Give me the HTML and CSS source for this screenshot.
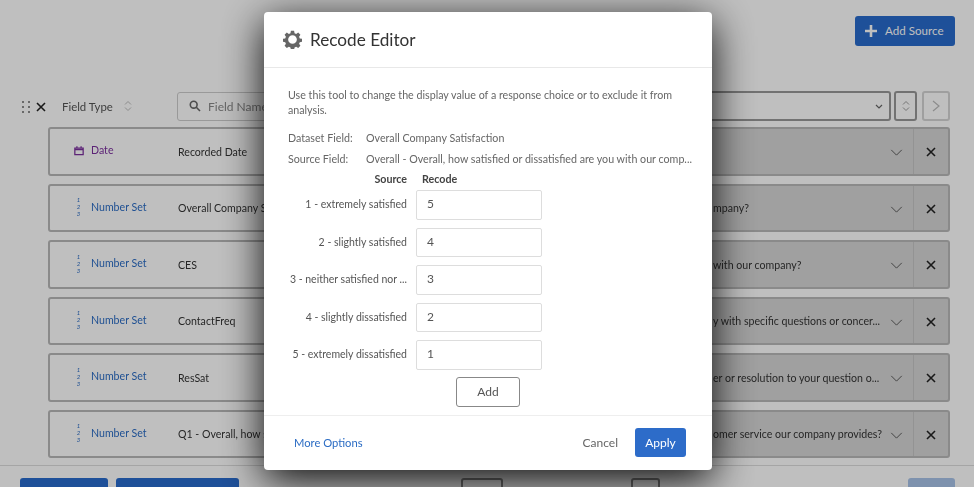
FILE: index.html
```html
<!DOCTYPE html>
<html lang="en">
<head>
<meta charset="utf-8">
<title>Recode Editor</title>
<link rel="stylesheet" href="styles.css">
</head>
<body>
<div class="app">
  <div class="topbar">
    <button class="add-source"><svg class="plus" viewBox="0 0 14 14"><path d="M7 1v12M1 7h12"/></svg>Add Source</button>
  </div>
  <div class="filters">
    <svg class="grip" viewBox="0 0 8 12"><g><circle cx="1" cy="1" r="1"/><circle cx="7" cy="1" r="1"/><circle cx="1" cy="6" r="1"/><circle cx="7" cy="6" r="1"/><circle cx="1" cy="11" r="1"/><circle cx="7" cy="11" r="1"/></g></svg>
    <svg class="cross head-cross" viewBox="0 0 10 10"><path d="M1 1l8 8M9 1l-8 8"/></svg>
    <span class="field-type">Field Type</span>
    <svg class="updown faint" viewBox="0 0 8 12"><path d="M1 4.5L4 1.5l3 3M1 7.5l3 3 3-3"/></svg>
    <div class="search">
      <svg class="lens" viewBox="0 0 12 12"><circle cx="4.7" cy="4.7" r="3.4"/><path d="M7.3 7.3l3.7 3.7"/></svg>
      <span>Field Name</span>
    </div>
    <div class="select"><svg class="mini-chev" viewBox="0 0 8 5"><path d="M1 1l3 3 3-3"/></svg></div>
    <button class="sort"><svg class="updown" viewBox="0 0 8 12"><path d="M1 4.5L4 1.5l3 3M1 7.5l3 3 3-3"/></svg></button>
    <button class="next"><svg viewBox="0 0 8 12"><path d="M1 1l6 5-6 5"/></svg></button>
  </div>
  <div class="rows">
    <div class="row"><div class="type date"><svg class="cal" viewBox="0 0 12 12"><path d="M1 3h10v8H1zM1 5h10M3.500 1v2M8.500 1v2"/></svg>Date</div><div class="name">Recorded Date</div><div class="desc"></div><svg class="chev" viewBox="0 0 14 8"><path d="M1 1l6 6 6-6"/></svg><div class="del"><svg class="cross" viewBox="0 0 10 10"><path d="M1 1l8 8M9 1l-8 8"/></svg></div></div>
    <div class="row"><div class="type"><span class="nums">1<br>2<br>3</span>Number Set</div><div class="name">Overall Company S</div><div class="desc">mpany?</div><svg class="chev" viewBox="0 0 14 8"><path d="M1 1l6 6 6-6"/></svg><div class="del"><svg class="cross" viewBox="0 0 10 10"><path d="M1 1l8 8M9 1l-8 8"/></svg></div></div>
    <div class="row"><div class="type"><span class="nums">1<br>2<br>3</span>Number Set</div><div class="name">CES</div><div class="desc">with our company?</div><svg class="chev" viewBox="0 0 14 8"><path d="M1 1l6 6 6-6"/></svg><div class="del"><svg class="cross" viewBox="0 0 10 10"><path d="M1 1l8 8M9 1l-8 8"/></svg></div></div>
    <div class="row"><div class="type"><span class="nums">1<br>2<br>3</span>Number Set</div><div class="name">ContactFreq</div><div class="desc">y with specific questions or concer...</div><svg class="chev" viewBox="0 0 14 8"><path d="M1 1l6 6 6-6"/></svg><div class="del"><svg class="cross" viewBox="0 0 10 10"><path d="M1 1l8 8M9 1l-8 8"/></svg></div></div>
    <div class="row"><div class="type"><span class="nums">1<br>2<br>3</span>Number Set</div><div class="name">ResSat</div><div class="desc">er or resolution to your question o...</div><svg class="chev" viewBox="0 0 14 8"><path d="M1 1l6 6 6-6"/></svg><div class="del"><svg class="cross" viewBox="0 0 10 10"><path d="M1 1l8 8M9 1l-8 8"/></svg></div></div>
    <div class="row"><div class="type"><span class="nums">1<br>2<br>3</span>Number Set</div><div class="name">Q1 - Overall, how s</div><div class="desc">omer service our company provides?</div><svg class="chev" viewBox="0 0 14 8"><path d="M1 1l6 6 6-6"/></svg><div class="del"><svg class="cross" viewBox="0 0 10 10"><path d="M1 1l8 8M9 1l-8 8"/></svg></div></div>
    <div class="row"></div>
  </div>
  <div class="footer">
    <button class="foot-btn first"></button>
    <button class="foot-btn second"></button>
    <div class="pager"><button class="page-btn wide"></button><button class="page-btn"></button></div>
    <button class="foot-btn last"></button>
  </div>
</div>
<div class="overlay"></div>
<div class="modal">
  <header class="modal-head">
    <svg class="gear" viewBox="0 0 24 24"><path d="M10 1h4l.6 3 2 .9 2.600-1.700 2.800 2.800-1.700 2.600.9 2 3 .6v3.600l-3 .6-.9 2 1.700 2.600-2.800 2.800-2.600-1.700-2 .9-.6 3h-4l-.6-3-2-.9-2.600 1.700-2.800-2.800 1.700-2.600-.9-2-3-.6v-3.600l3-.6.9-2-1.700-2.600 2.800-2.800 2.600 1.700 2-.9zM12 6.500a5.500 5.500 0 1 0 0 11 5.500 5.500 0 0 0 0-11z" fill-rule="evenodd"/></svg>
    <h1>Recode Editor</h1>
  </header>
  <div class="modal-body">
    <p class="intro">Use this tool to change the display value of a response choice or to exclude it from analysis.</p>
    <dl class="meta">
      <div class="meta-row"><dt>Dataset Field:</dt><dd>Overall Company Satisfaction</dd></div>
      <div class="meta-row"><dt>Source Field:</dt><dd>Overall - Overall, how satisfied or dissatisfied are you with our comp...</dd></div>
    </dl>
    <div class="grid">
      <div class="col-head src">Source</div><div class="col-head rec">Recode</div>
      <div class="label">1 - extremely satisfied</div><div class="input">5</div>
      <div class="label">2 - slightly satisfied</div><div class="input">4</div>
      <div class="label">3 - neither satisfied nor ...</div><div class="input">3</div>
      <div class="label">4 - slightly dissatisfied</div><div class="input">2</div>
      <div class="label">5 - extremely dissatisfied</div><div class="input">1</div>
      <button class="add">Add</button>
    </div>
  </div>
  <footer class="modal-foot">
    <a class="more">More Options</a>
    <span class="cancel">Cancel</span>
    <button class="apply">Apply</button>
  </footer>
</div>
</body>
</html>
```
FILE: styles.css
```css
* { box-sizing: border-box; }
html, body { margin: 0; height: 100%; overflow: hidden; }
body { font-family: "Lato", "Liberation Sans", sans-serif; background: #fff; position: relative; width: 974px; height: 487px; }
button { font-family: inherit; padding: 0; }
svg { display: block; fill: none; stroke: currentColor; }

.app { height: 487px; overflow: hidden; color: #333; filter: blur(0.5px); }
.topbar { height: 91px; padding: 16px 19px 0 0; display: flex; justify-content: flex-end; }
.add-source { width: 100px; height: 30px; border: 0; border-radius: 3px; background: #296bcc; color: #fff; font-size: 11.600px; display: flex; align-items: center; gap: 7px; padding: 0 0 2px 9px; }
.plus { width: 14px; height: 14px; stroke-width: 2.6; margin-top: 2px; }

.filters { height: 30px; display: flex; align-items: center; padding: 0 24px 0 22px; }
.grip { width: 8px; height: 12px; fill: #666; stroke: none; margin-top: 1px; }
.head-cross { margin-left: 6px; }
.cross { width: 10px; height: 10px; stroke: #222; stroke-width: 1.6; margin-top: 2px; }
.field-type { margin-left: 16px; width: 62px; font-size: 11.400px; color: #555; }
.updown { width: 8px; height: 12px; stroke: #999; stroke-width: 1; }
.faint { stroke: #bbb; }
.search { margin-left: 45px; width: 200px; height: 29px; flex: none; border: 1px solid #ccc; border-radius: 3px; display: flex; align-items: center; padding-left: 11px; gap: 7px; font-size: 12px; color: #888; }
.lens { width: 12px; height: 12px; stroke: #666; stroke-width: 1.6; }
.select { flex: 1; margin-left: 10px; height: 30px; border: 2px solid #999; border-radius: 3px; display: flex; align-items: center; justify-content: flex-end; padding-right: 6px; }
.mini-chev { width: 8px; height: 5px; stroke: #666; stroke-width: 1.2; }
.sort { width: 23px; height: 30px; margin-left: 3px; background: transparent; border: 2px solid #999; border-radius: 3px; display: flex; align-items: center; justify-content: center; }
.next { width: 28px; height: 30px; margin-left: 5px; background: transparent; border: 2px solid #d4d4d4; border-radius: 3px; display: flex; align-items: center; justify-content: center; color: #bbb; }
.next svg { width: 8px; height: 12px; stroke-width: 1.2; }

.rows { padding: 6px 24px 0 48px; display: flex; flex-direction: column; gap: 8px; height: 345px; overflow: hidden; }
.row { flex: none; height: 48.5px; border: 2px solid #b8b8b8; border-radius: 3px; display: flex; align-items: center; font-size: 10.600px; background: linear-gradient(90deg, transparent 0, transparent 50%, #d6d6d6 50%); }
.type { width: 128px; padding-left: 24px; display: flex; align-items: center; gap: 10px; color: #2b6cc4; margin-top: -2px; }
.type .nums { margin-left: 2px; }
.date { color: #7b2f9e; gap: 7px; }
.cal { width: 10px; height: 11px; stroke-width: 1.5; }
.nums { width: 5px; font-size: 6px; line-height: 7px; font-style: italic; text-align: center; }
.name { width: 86px; color: #333; white-space: nowrap; margin-top: 1px; }
.desc { flex: 1; min-width: 0; padding-left: 449px; white-space: nowrap; overflow: hidden; color: #333; margin-top: 1px; }
.chev { width: 13px; height: 7px; margin: 3px 10px 0 0; stroke: #555; stroke-width: 1.1; }
.del { width: 35px; align-self: stretch; border-left: 1px solid #c4c4c4; display: flex; align-items: center; justify-content: center; }

.footer { height: 21px; margin-top: -1px; border-top: 1px solid #ddd; padding: 12px 19px 0 20px; display: flex; gap: 8px; }
.foot-btn { height: 24px; border: 0; border-radius: 3px; background: #296bcc; }
.first { width: 88px; }
.second { width: 123px; }
.pager { flex: 1; display: flex; gap: 128px; padding-left: 214px; }
.page-btn { width: 29px; height: 24px; background: transparent; border: 2px solid #888; border-radius: 3px; }
.page-btn.wide { width: 42px; }
.last { width: 47px; background: #a9c3e8; }

.overlay { position: absolute; inset: 0; background: rgba(0, 0, 0, 0.25); }

.modal { position: absolute; left: 264px; top: 12px; width: 448px; height: 458px; background: #fff; border-radius: 4px; box-shadow: 0 10px 42px rgba(0, 0, 0, 0.95); display: flex; flex-direction: column; color: #666; filter: blur(0.35px); }
.modal-head { height: 56px; border-bottom: 1px solid #e8e8e8; display: flex; align-items: center; padding-left: 19px; gap: 8px; flex: none; }
.gear { width: 19px; height: 19px; fill: #666; stroke: none; }
.modal-head h1 { margin: 0; font-size: 17.200px; font-weight: 400; color: #333; }
.modal-body { flex: 1; padding: 19px 20px 0 24px; font-size: 10.700px; }
.intro { margin: 0; line-height: 15px; }
.meta { margin: 10px 0 0; }
.meta-row { display: flex; height: 21px; align-items: center; }
.meta dt { width: 78px; flex: none; }
.meta dd { margin: 0; white-space: nowrap; }
.grid { display: grid; grid-template-columns: 119px 126px; column-gap: 9px; row-gap: 8px; margin-top: 4px; }
.col-head { font-weight: 700; color: #444; height: 12px; line-height: 12px; margin-bottom: -3px; }
.src { text-align: right; }
.rec { padding-left: 6px; }
.label { text-align: right; align-self: center; white-space: nowrap; color: #555; font-size: 10.500px; margin-top: -1px; }
.input { height: 29.500px; border: 1px solid #ddd; border-radius: 2px; padding: 0 0 2px 10px; display: flex; align-items: center; font-size: 12px; color: #555; }
.add { grid-column: 2; justify-self: start; margin-left: 40px; width: 64px; height: 30px; margin-top: -1px; background: #fff; border: 1.500px solid #888; border-radius: 3px; font-size: 12px; color: #555; }
.modal-foot { height: 55px; flex: none; border-top: 1px solid #eee; display: flex; align-items: center; padding: 0 26px 2px 30px; font-size: 12px; }
.more { color: #2b6cc4; flex: 1; font-size: 11.200px; }
.cancel { color: #666; margin-right: 17px; }
.apply { width: 51px; height: 29px; border: 0; border-radius: 3px; background: #2d6cc9; color: #fff; font-size: 12px; }
```
